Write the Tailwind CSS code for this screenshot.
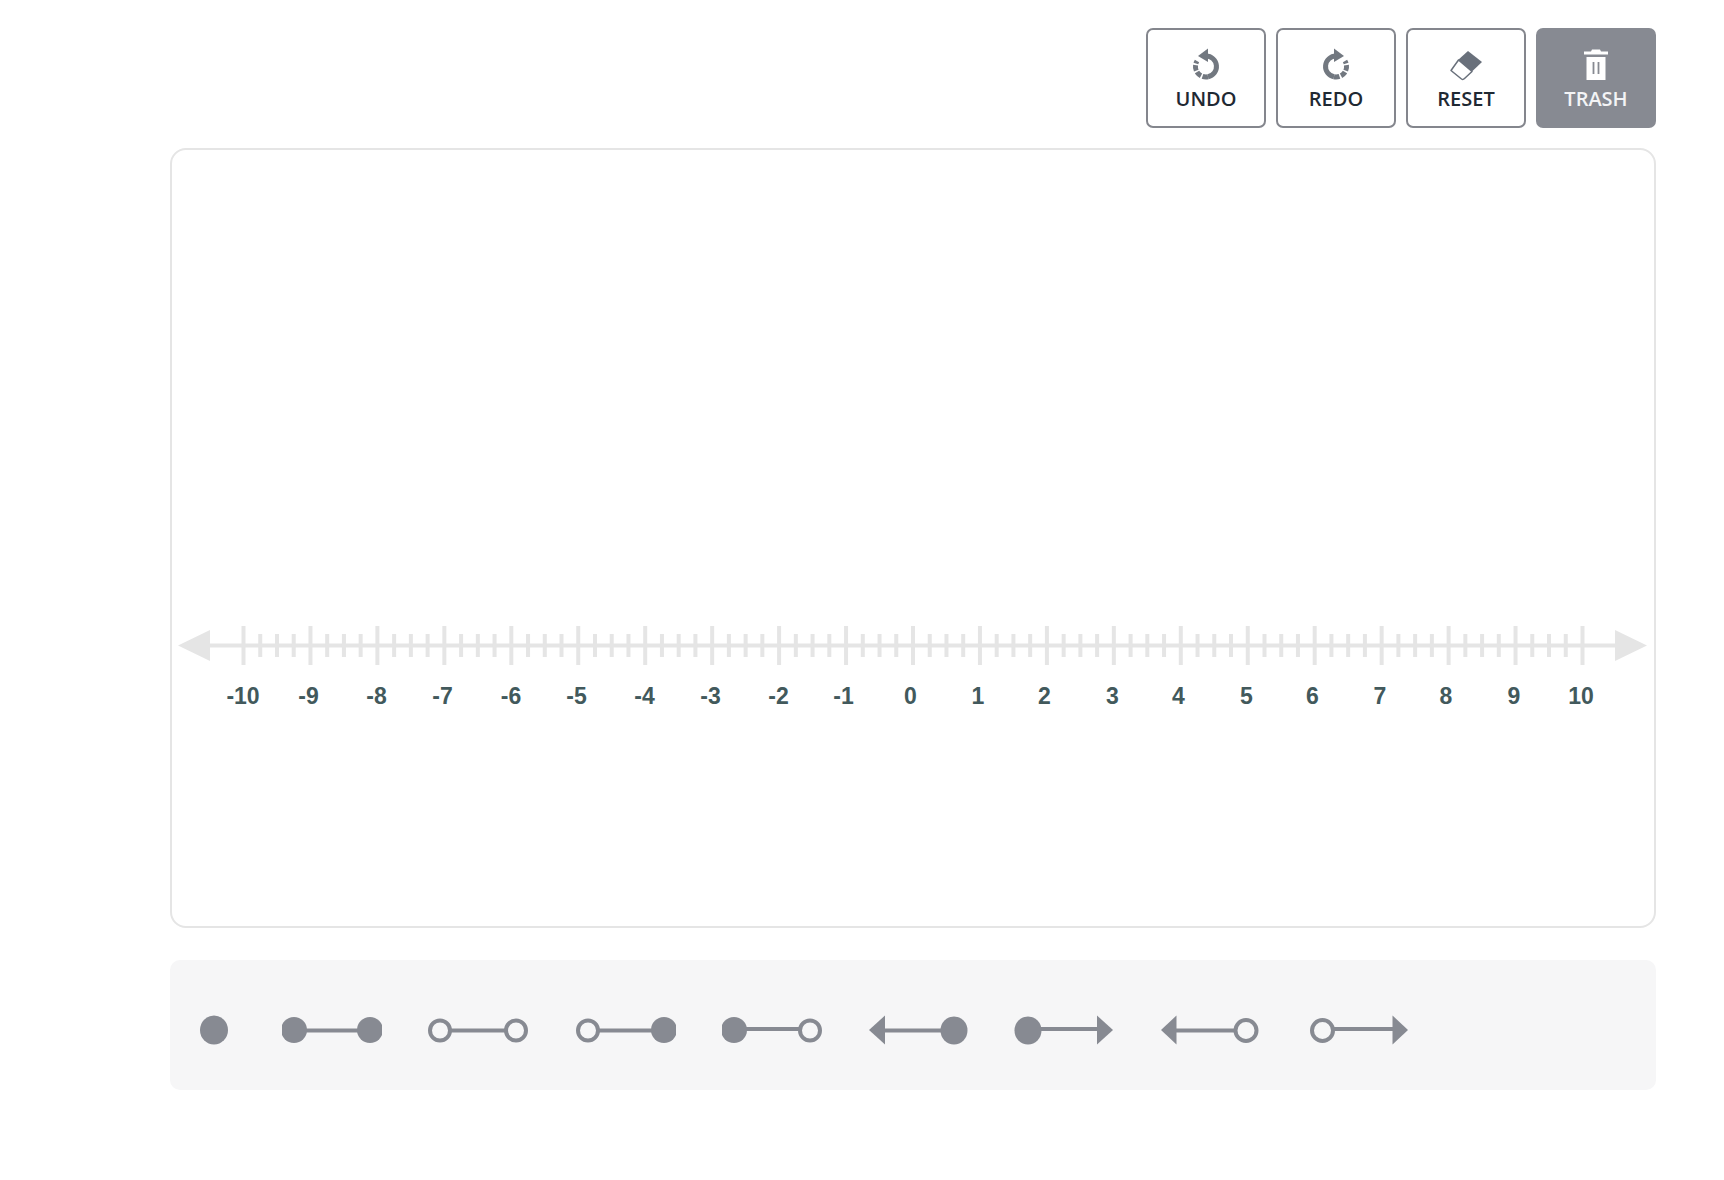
<!DOCTYPE html>
<html lang="en">
<head>
<meta charset="utf-8">
<title>Number line</title>
<script src="https://cdn.jsdelivr.net/npm/@tailwindcss/browser@4"></script>
</head>
<body class="bg-white">
<div class="w-[1724px] h-[1180px] pl-[170px] pr-[68px] pt-[28px] font-['Open_Sans',sans-serif]">
  <div class="flex justify-end gap-[10px]">
    <button class="w-[120px] h-[100px] border-2 border-[#84868d] rounded-[7px] bg-white flex flex-col items-center text-[#1f2933] text-[20px] leading-[28px]">
      <svg class="mt-[18px] mb-[5px]" width="32" height="32" viewBox="0 0 32 32" fill="none">
        <path d="M16 8A10.500 10.500 0 0 1 18 28.800" stroke="#727880" stroke-width="5"/>
        <path d="M18 28.800A10.500 10.500 0 0 1 7 13" stroke="#727880" stroke-width="5" stroke-dasharray="5.500 1.600"/>
        <path d="M18 0.500V14L8 8Z" fill="#727880"/>
      </svg>
      <span class="font-[550]">UNDO</span>
    </button>
    <button class="w-[120px] h-[100px] border-2 border-[#84868d] rounded-[7px] bg-white flex flex-col items-center text-[#1f2933] text-[20px] leading-[28px]">
      <svg class="mt-[18px] mb-[5px]" width="32" height="32" viewBox="0 0 32 32" fill="none">
        <path d="M16 8A10.500 10.500 0 0 0 14 28.800" stroke="#727880" stroke-width="5"/>
        <path d="M14 28.800A10.500 10.500 0 0 0 25 13" stroke="#727880" stroke-width="5" stroke-dasharray="5.500 1.600"/>
        <path d="M14 0.500V14L24 8Z" fill="#727880"/>
      </svg>
      <span class="font-[550]">REDO</span>
    </button>
    <button class="w-[120px] h-[100px] border-2 border-[#84868d] rounded-[7px] bg-white flex flex-col items-center text-[#1f2933] text-[20px] leading-[28px]">
      <svg class="mt-[20px] mb-[3px]" width="34" height="32" viewBox="0 0 34 32" fill="none">
        <path d="M19 1L33 12L23 21.500L9 10Z" fill="#69707b"/>
        <path d="M9.500 10L23 21.500L15.500 28.500Q14 30 12.500 29L2 20.500Z" fill="#fff" stroke="#69707b" stroke-width="1.500" stroke-linejoin="round"/>
      </svg>
      <span class="font-[550]">RESET</span>
    </button>
    <button class="w-[120px] h-[100px] rounded-[7px] bg-[#878a92] flex flex-col items-center text-[#f3f4f6] text-[20px] leading-[28px] pt-[2px]">
      <svg class="mt-[18px] mb-[5px]" width="32" height="32" viewBox="0 0 32 32" fill="none">
        <path d="M12 1.500H20L21 3.500H28V6.500H4V3.500H11Z" fill="#fff"/>
        <path d="M6.500 9H25.500V32H6.500Z" fill="#fff"/>
        <path d="M13.500 14V26M18.500 14V26" stroke="#878a92" stroke-width="1.800"/>
      </svg>
      <span class="font-[550]">TRASH</span>
    </button>
  </div>

  <div class="mt-[20px] h-[780px] border-2 border-[#e5e5e5] rounded-[16px] bg-white pt-[470px]">
    <svg class="block font-['Liberation_Sans',sans-serif]" width="1482" height="110" viewBox="0 0 1482 110">
      <defs>
        <path id="major" d="M0 6V45" stroke="#e5e5e5" stroke-width="4"/>
        <path id="minor" d="M16.740 14V37M33.480 14V37M50.210 14V37" stroke="#e5e5e5" stroke-width="4"/>
      </defs>
      <path d="M36 25.500H1445" stroke="#e5e5e5" stroke-width="4"/>
      <path d="M6 25.500L38 10V41Z" fill="#e5e5e5"/>
      <path d="M1475 25.500L1443 10V41Z" fill="#e5e5e5"/>
      <g>
        <use href="#major" x="71.5"/><use href="#minor" x="71.5"/>
        <use href="#major" x="138.45"/><use href="#minor" x="138.45"/>
        <use href="#major" x="205.4"/><use href="#minor" x="205.4"/>
        <use href="#major" x="272.35"/><use href="#minor" x="272.35"/>
        <use href="#major" x="339.3"/><use href="#minor" x="339.3"/>
        <use href="#major" x="406.25"/><use href="#minor" x="406.25"/>
        <use href="#major" x="473.2"/><use href="#minor" x="473.2"/>
        <use href="#major" x="540.15"/><use href="#minor" x="540.15"/>
        <use href="#major" x="607.1"/><use href="#minor" x="607.1"/>
        <use href="#major" x="674.05"/><use href="#minor" x="674.05"/>
        <use href="#major" x="741"/><use href="#minor" x="741"/>
        <use href="#major" x="807.95"/><use href="#minor" x="807.95"/>
        <use href="#major" x="874.9"/><use href="#minor" x="874.9"/>
        <use href="#major" x="941.85"/><use href="#minor" x="941.85"/>
        <use href="#major" x="1008.8"/><use href="#minor" x="1008.8"/>
        <use href="#major" x="1075.75"/><use href="#minor" x="1075.75"/>
        <use href="#major" x="1142.7"/><use href="#minor" x="1142.7"/>
        <use href="#major" x="1209.65"/><use href="#minor" x="1209.65"/>
        <use href="#major" x="1276.6"/><use href="#minor" x="1276.6"/>
        <use href="#major" x="1343.55"/><use href="#minor" x="1343.55"/>
        <use href="#major" x="1410.5"/>
      </g>
      <g fill="#42595c" font-size="23" font-weight="700" text-anchor="middle">
        <text x="71" y="84">-10</text><text x="136.500" y="84">-9</text><text x="204.500" y="84">-8</text><text x="270.500" y="84">-7</text><text x="339" y="84">-6</text><text x="404.500" y="84">-5</text><text x="472.500" y="84">-4</text><text x="538.500" y="84">-3</text><text x="606.500" y="84">-2</text><text x="671.500" y="84">-1</text>
        <text x="738.500" y="84">0</text><text x="806" y="84">1</text><text x="872.500" y="84">2</text><text x="940.500" y="84">3</text><text x="1006.500" y="84">4</text><text x="1074.500" y="84">5</text><text x="1140.500" y="84">6</text><text x="1208" y="84">7</text><text x="1274" y="84">8</text><text x="1342" y="84">9</text><text x="1409" y="84">10</text>
      </g>
    </svg>
  </div>

  <div class="mt-[32px] h-[130px] bg-[#f6f6f7] rounded-[10px] pl-[30px] pt-[50px] flex items-start">
    <svg width="28" height="40" viewBox="0 0 28 40"><ellipse cx="14" cy="20" rx="14" ry="14.500" fill="#878a92"/></svg>
    <svg class="ml-[54px]" width="100" height="40" viewBox="0 0 100 40"><path d="M12 20.500H88" stroke="#878a92" stroke-width="4"/><ellipse cx="12" cy="20" rx="13" ry="13" fill="#878a92"/><ellipse cx="88" cy="20" rx="13" ry="13" fill="#878a92"/></svg>
    <svg class="ml-[46px]" width="100" height="40" viewBox="0 0 100 40"><path d="M22 20.500H78" stroke="#878a92" stroke-width="4"/><circle cx="12" cy="20.500" r="10" fill="#f6f6f7" stroke="#878a92" stroke-width="4"/><circle cx="88" cy="20.500" r="10" fill="#f6f6f7" stroke="#878a92" stroke-width="4"/></svg>
    <svg class="ml-[48px]" width="100" height="40" viewBox="0 0 100 40"><path d="M22 20.500H78" stroke="#878a92" stroke-width="4"/><circle cx="12" cy="20.500" r="10" fill="#f6f6f7" stroke="#878a92" stroke-width="4"/><ellipse cx="88" cy="20" rx="13" ry="13" fill="#878a92"/></svg>
    <svg class="ml-[46px]" width="100" height="40" viewBox="0 0 100 40"><path d="M12 19H78" stroke="#878a92" stroke-width="4"/><ellipse cx="12" cy="20" rx="13" ry="13" fill="#878a92"/><circle cx="88" cy="20.500" r="10" fill="#f6f6f7" stroke="#878a92" stroke-width="4"/></svg>
    <svg class="ml-[47px]" width="99" height="40" viewBox="0 0 99 40"><path d="M14 20.500H72" stroke="#878a92" stroke-width="4"/><path d="M0 20L16 5.500V34.500Z" fill="#878a92"/><ellipse cx="85" cy="20.500" rx="13.500" ry="14" fill="#878a92"/></svg>
    <svg class="ml-[46px]" width="99" height="40" viewBox="0 0 99 40"><path d="M14 19H85" stroke="#878a92" stroke-width="4"/><path d="M99 20L83 5.500V34.500Z" fill="#878a92"/><ellipse cx="14" cy="20.500" rx="13.500" ry="14" fill="#878a92"/></svg>
    <svg class="ml-[48px]" width="98" height="40" viewBox="0 0 98 40"><path d="M14 20.500H74" stroke="#878a92" stroke-width="4"/><path d="M0 20L15.500 5.500V34.500Z" fill="#878a92"/><circle cx="85" cy="20.500" r="10.500" fill="#f6f6f7" stroke="#878a92" stroke-width="4"/></svg>
    <svg class="ml-[51px]" width="98" height="40" viewBox="0 0 98 40"><path d="M24 19H84" stroke="#878a92" stroke-width="4"/><path d="M98 20L82.500 5.500V34.500Z" fill="#878a92"/><circle cx="12.500" cy="20.500" r="10.500" fill="#f6f6f7" stroke="#878a92" stroke-width="4"/></svg>
  </div>
</div>
</body>
</html>
